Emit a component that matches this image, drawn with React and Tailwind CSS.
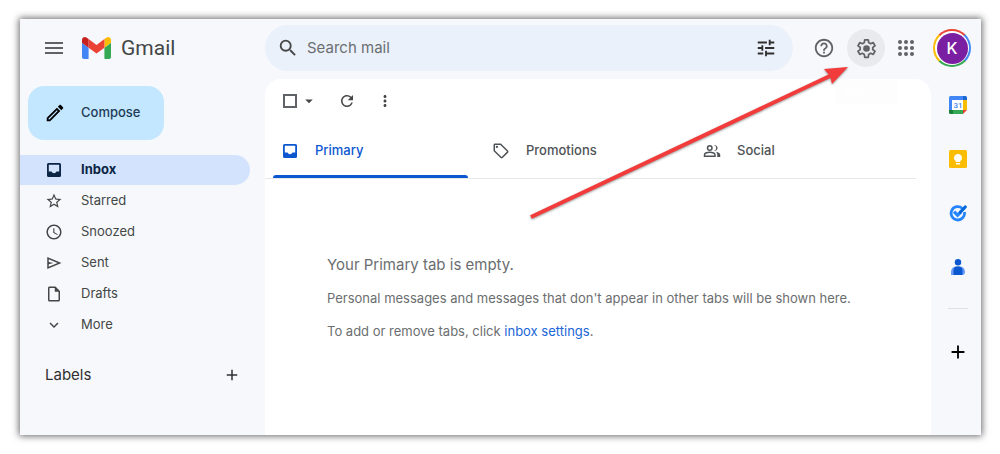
import {
  MdAccessTime,
  MdAdd,
  MdArrowDropDown,
  MdExpandMore,
  MdHelpOutline,
  MdMenu,
  MdMoreVert,
  MdOutlineEdit,
  MdOutlineInsertDriveFile,
  MdOutlineSell,
  MdRefresh,
  MdSearch,
  MdStarBorder,
  MdTune,
} from "react-icons/md";

function GmailLogo() {
  return (
    <svg width="29" height="22" viewBox="52 42 88 66" aria-hidden="true">
      <path fill="#4285f4" d="M58 108h14V74L52 59v43c0 3.320 2.690 6 6 6" />
      <path fill="#34a853" d="M120 108h14c3.320 0 6-2.690 6-6V59l-20 15" />
      <path fill="#fbbc04" d="M120 48v26l20-15v-8c0-7.420-8.470-11.650-14.400-7.200" />
      <path fill="#ea4335" d="M72 74V48l24 18 24-18v26L96 92" />
      <path fill="#c5221f" d="M52 51v8l20 15V48l-5.600-4.200c-5.940-4.450-14.400-.22-14.400 7.200" />
    </svg>
  );
}

function GearIcon() {
  return (
    <svg width="21" height="21" viewBox="0 0 24 24" fill="none" aria-hidden="true">
      <path
        stroke="currentColor"
        strokeWidth="2"
        strokeLinejoin="round"
        d="M10 2h4l.5 3.200 2.200 1.300 3-1.200 2 3.500-2.500 1.900v2.600l2.500 1.900-2 3.500-3-1.200-2.200 1.300L14 22h-4l-.5-3.200-2.200-1.300-3 1.200-2-3.500 2.500-1.900v-2.600L2.300 8.800l2-3.500 3 1.200 2.200-1.300z"
      />
      <circle cx="12" cy="12" r="3.800" fill="currentColor" />
    </svg>
  );
}

function InboxIcon() {
  return (
    <svg width="18" height="18" viewBox="0 0 18 18" fill="currentColor" aria-hidden="true">
      <path
        fillRule="evenodd"
        d="M3.500 2h11A1.500 1.500 0 0 1 16 3.500v11a1.500 1.500 0 0 1-1.500 1.500h-11A1.500 1.500 0 0 1 2 14.500v-11A1.500 1.500 0 0 1 3.500 2zm.3 1.800v6.700h2.700a2.700 2.700 0 0 0 5 0h2.700V3.800z"
      />
    </svg>
  );
}

function SendIcon() {
  return (
    <svg width="18" height="18" viewBox="0 -960 960 960" fill="currentColor" aria-hidden="true">
      <path d="M120-160v-640l760 320-760 320Zm80-120 474-200-474-200v140l240 60-240 60v140Z" />
    </svg>
  );
}

function PeopleIcon() {
  return (
    <svg width="18" height="18" viewBox="0 0 24 24" fill="none" stroke="currentColor" strokeWidth="2" aria-hidden="true">
      <circle cx="9" cy="8" r="3" />
      <path d="M2 19v-1.800c0-1.200.7-2 1.800-2.500C5.400 14 7.200 13.600 9 13.600s3.600.4 5.200 1.100c1.100.5 1.800 1.300 1.800 2.500V19z" />
      <path
        fill="currentColor"
        stroke="none"
        d="M14.500 11.900a4 4 0 0 0 0-7.800 4 4 0 1 1 0 7.800zM19 20v-3c0-1.500-.7-2.900-2.200-3.900 2.700.4 6.200 1.500 6.200 3.900v3z"
      />
    </svg>
  );
}

function AppsIcon() {
  return (
    <svg width="16" height="16" viewBox="0 0 16 16" fill="currentColor" aria-hidden="true">
      {[2, 8, 14].map((cy) => [2, 8, 14].map((cx) => <circle key={`${cx}-${cy}`} cx={cx} cy={cy} r="2" />))}
    </svg>
  );
}

function CalendarIcon() {
  return (
    <svg width="18" height="18" viewBox="0 0 18 18" aria-hidden="true">
      <path fill="#4285f4" d="M1.500 0H14v4H4v10H0V1.500A1.500 1.500 0 0 1 1.500 0z" />
      <path fill="#1967d2" d="M14 0h2.500A1.500 1.500 0 0 1 18 1.500V4h-4z" />
      <path fill="#fbbc04" d="M14 4h4v10h-4z" />
      <path fill="#34a853" d="M4 14h10v4H4z" />
      <path fill="#188038" d="M0 14h4v4H1.500A1.500 1.500 0 0 1 0 16.500z" />
      <path fill="#ea4335" d="M14 14h4l-4 4z" />
      <path fill="#fff" d="M3 4h11v10H3z" />
      <text x="9" y="12" textAnchor="middle" fill="#4285f4" fontSize="8" fontWeight="500" fontFamily="Roboto, sans-serif">
        31
      </text>
    </svg>
  );
}

function KeepIcon() {
  return (
    <svg width="18" height="18" viewBox="0 0 18 18" aria-hidden="true">
      <rect width="18" height="18" rx="1.5" fill="#fbbc04" />
      <path fill="#fff" d="M9 4a4 4 0 0 0-2.200 7.300V12h4.400v-.7A4 4 0 0 0 9 4zM6.900 13h4.200v1.400H6.900z" />
    </svg>
  );
}

function TasksIcon() {
  return (
    <svg width="18" height="18" viewBox="0 0 18 18" fill="none" aria-hidden="true">
      <path stroke="#2684fc" strokeWidth="2.800" d="M13.200 4.200A6.700 6.700 0 1 0 15.400 8" />
      <path stroke="#2684fc" strokeWidth="3.200" d="M5 7.600l3.600 3.600 3.400-3.400" />
      <path stroke="#0066da" strokeWidth="3.200" strokeLinecap="round" d="M11.500 8l4.700-5" />
    </svg>
  );
}

function ContactsIcon() {
  return (
    <svg width="18" height="18" viewBox="0 0 18 18" aria-hidden="true">
      <circle cx="9" cy="4.200" r="3.200" fill="#0b57d0" />
      <path fill="#699bf7" d="M2 17v-3.500A5.500 5.500 0 0 1 7 8.500h4a5.500 5.500 0 0 1 5 5v.5a3 3 0 0 1-3 3z" />
      <path fill="#0b57d0" d="M4.500 17v-5A4 4 0 0 1 8 8.500h2a4 4 0 0 1 3.500 3.500v5z" />
    </svg>
  );
}

const folders = [
  { name: "Inbox", icon: <InboxIcon />, active: true },
  { name: "Starred", icon: <MdStarBorder size={18} /> },
  { name: "Snoozed", icon: <MdAccessTime size={18} /> },
  { name: "Sent", icon: <SendIcon /> },
  { name: "Drafts", icon: <MdOutlineInsertDriveFile size={18} /> },
  { name: "More", icon: <MdExpandMore size={18} /> },
];

const tabs = [
  { name: "Primary", icon: <InboxIcon />, active: true },
  { name: "Promotions", icon: <MdOutlineSell size={18} /> },
  { name: "Social", icon: <PeopleIcon /> },
];

const addons = [
  { name: "Calendar", icon: <CalendarIcon /> },
  { name: "Keep", icon: <KeepIcon /> },
  { name: "Tasks", icon: <TasksIcon /> },
  { name: "Contacts", icon: <ContactsIcon /> },
];

function Header() {
  return (
    <header className="flex h-[60px] items-center pt-1.5 pb-2 pr-2.5">
      <div className="flex w-[245px] shrink-0 items-center pl-[22px]">
        <button aria-label="Main menu" className="text-[#5f6368]">
          <MdMenu size={24} />
        </button>
        <a href="#inbox" className="ml-4 flex items-center gap-2.5 font-[Roboto,sans-serif] text-[21px] leading-7 text-[#444746]">
          <GmailLogo />
          Gmail
        </a>
      </div>

      <form className="flex h-[46px] flex-1 items-center rounded-full bg-[#eaf1fb] px-3 text-[#444746]">
        <button type="button" aria-label="Search">
          <MdSearch size={22} />
        </button>
        <input
          type="text"
          aria-label="Search mail"
          placeholder="Search mail"
          className="ml-2 min-w-0 flex-1 bg-transparent text-[15px] outline-none placeholder:text-[#6b6e70]"
        />
        <button type="button" aria-label="Show search options" className="mr-1 text-[#303030]">
          <MdTune size={22} />
        </button>
      </form>

      <div className="flex items-center gap-1 pl-3 text-[#5f6368]">
        <button aria-label="Support" className="flex size-[38px] items-center justify-center">
          <MdHelpOutline size={22} />
        </button>
        <div className="relative">
          <button aria-label="Settings" className="flex size-[38px] items-center justify-center rounded-full bg-[#e8eaed]">
            <GearIcon />
          </button>
          <span className="absolute top-[51px] left-1/2 -translate-x-1/2 rounded bg-[#fdfdfd] px-2 py-1 text-xs font-medium text-white">
            Settings
          </span>
        </div>
        <button aria-label="Google apps" className="flex h-[38px] w-[34px] items-center justify-center">
          <AppsIcon />
        </button>
        <button
          aria-label="Account"
          className="ml-1.5 flex size-[38px] items-center justify-center rounded-full bg-[conic-gradient(from_315deg,#ea4335_0_90deg,#4285f4_90deg_180deg,#34a853_180deg_270deg,#fbbc04_270deg)]"
        >
          <span className="flex size-[34px] items-center justify-center rounded-full bg-white">
            <span className="flex size-[31px] items-center justify-center rounded-full bg-[#7b1fa2] text-base font-medium text-white">K</span>
          </span>
        </button>
      </div>
    </header>
  );
}

function Sidebar() {
  return (
    <aside className="w-[245px] shrink-0 pt-[7px]">
      <button className="ml-2 flex h-[54px] w-[136px] items-center gap-[15px] rounded-2xl bg-[#c2e7ff] pl-4 text-[13px] font-medium text-[#1f3b57]">
        <MdOutlineEdit size={22} className="text-black" />
        Compose
      </button>

      <nav className="mt-[15px] mr-[15px]">
        {folders.map((folder) => (
          <a
            key={folder.name}
            href={`#${folder.name.toLowerCase()}`}
            className={
              folder.active
                ? "flex h-[30px] items-center gap-[18px] rounded-r-full bg-[#d3e3fd] pl-[25px] text-[13px] font-bold text-[#0b2545]"
                : "flex h-[31px] items-center gap-[18px] pl-[25px] text-[13px] text-[#444746]"
            }
          >
            {folder.icon}
            {folder.name}
          </a>
        ))}
      </nav>

      <div className="mt-6 mr-6 ml-[25px] flex items-center justify-between text-[#303030]">
        <h2 className="text-[15px]">Labels</h2>
        <button aria-label="Create new label">
          <MdAdd size={18} />
        </button>
      </div>
    </aside>
  );
}

function Inbox() {
  return (
    <main className="flex-1 rounded-t-2xl bg-white">
      <div className="flex h-11 items-center pl-[18px] text-[#444746]">
        <input type="checkbox" aria-label="Select" className="size-3.5 appearance-none border-2 border-[#5f6368]" />
        <button aria-label="Select options" className="ml-[3px]">
          <MdArrowDropDown size={18} />
        </button>
        <button aria-label="Refresh" className="ml-5">
          <MdRefresh size={18} />
        </button>
        <button aria-label="More" className="ml-5">
          <MdMoreVert size={18} />
        </button>
      </div>

      <div role="tablist" className="mr-[15px] flex border-b border-[#e6e8ea]">
        {tabs.map((tab) => (
          <button
            key={tab.name}
            role="tab"
            aria-selected={Boolean(tab.active)}
            className={
              tab.active
                ? "max-w-[211px] flex-1 px-2 text-[13px] font-medium text-[#0b57d0]"
                : "max-w-[211px] flex-1 px-2 text-[13px] font-medium text-[#505356]"
            }
          >
            <span className="flex h-[52px] items-center gap-4 pt-1 pl-2">
              {tab.icon}
              {tab.name}
            </span>
            <span className={tab.active ? "block h-[3px] rounded-t-full bg-[#0b57d0]" : "block h-[3px]"} />
          </button>
        ))}
      </div>

      <section className="space-y-[13px] px-[62px] pt-[76px] text-[13px] leading-5 text-[#6b6e70]">
        <h1 className="text-[15px] leading-5">Your Primary tab is empty.</h1>
        <p>Personal messages and messages that don't appear in other tabs will be shown here.</p>
        <p>
          To add or remove tabs, click{" "}
          <a href="#settings" className="text-[#1a66d8]">
            inbox settings
          </a>
          .
        </p>
      </section>
    </main>
  );
}

function AddonRail() {
  return (
    <aside className="flex w-[50px] shrink-0 flex-col items-center pt-[17px] pl-1">
      <div className="flex flex-col gap-9">
        {addons.map((addon) => (
          <button key={addon.name} aria-label={addon.name}>
            {addon.icon}
          </button>
        ))}
      </div>
      <hr className="mt-8 w-5 border-[#dfe1e5]" />
      <button aria-label="Get add-ons" className="mt-8 text-black">
        <MdAdd size={22} />
      </button>
    </aside>
  );
}

// Points at the settings button, so it is anchored to the right edge.
function PointerArrow() {
  return (
    <svg
      width="324"
      height="158"
      viewBox="0 0 324 158"
      className="pointer-events-none absolute top-[45px] right-[130px] drop-shadow-[0_1px_1px_rgba(0,0,0,0.4)]"
      aria-hidden="true"
    >
      <path stroke="#f23b3b" strokeWidth="4" d="M4 153L305 11" />
      <path fill="#f23b3b" d="M321 3L305 20 303 12 297 5z" />
    </svg>
  );
}

export default function App() {
  return (
    <div className="flex min-h-screen bg-white p-[19px] pl-5 font-[Inter,sans-serif]">
      <div className="relative flex flex-1 flex-col bg-[#f6f8fc] shadow-[0_0_7px_1px_rgba(0,0,0,0.6)]">
        <Header />
        <div className="flex flex-1">
          <Sidebar />
          <Inbox />
          <AddonRail />
        </div>
        <PointerArrow />
      </div>
    </div>
  );
}
